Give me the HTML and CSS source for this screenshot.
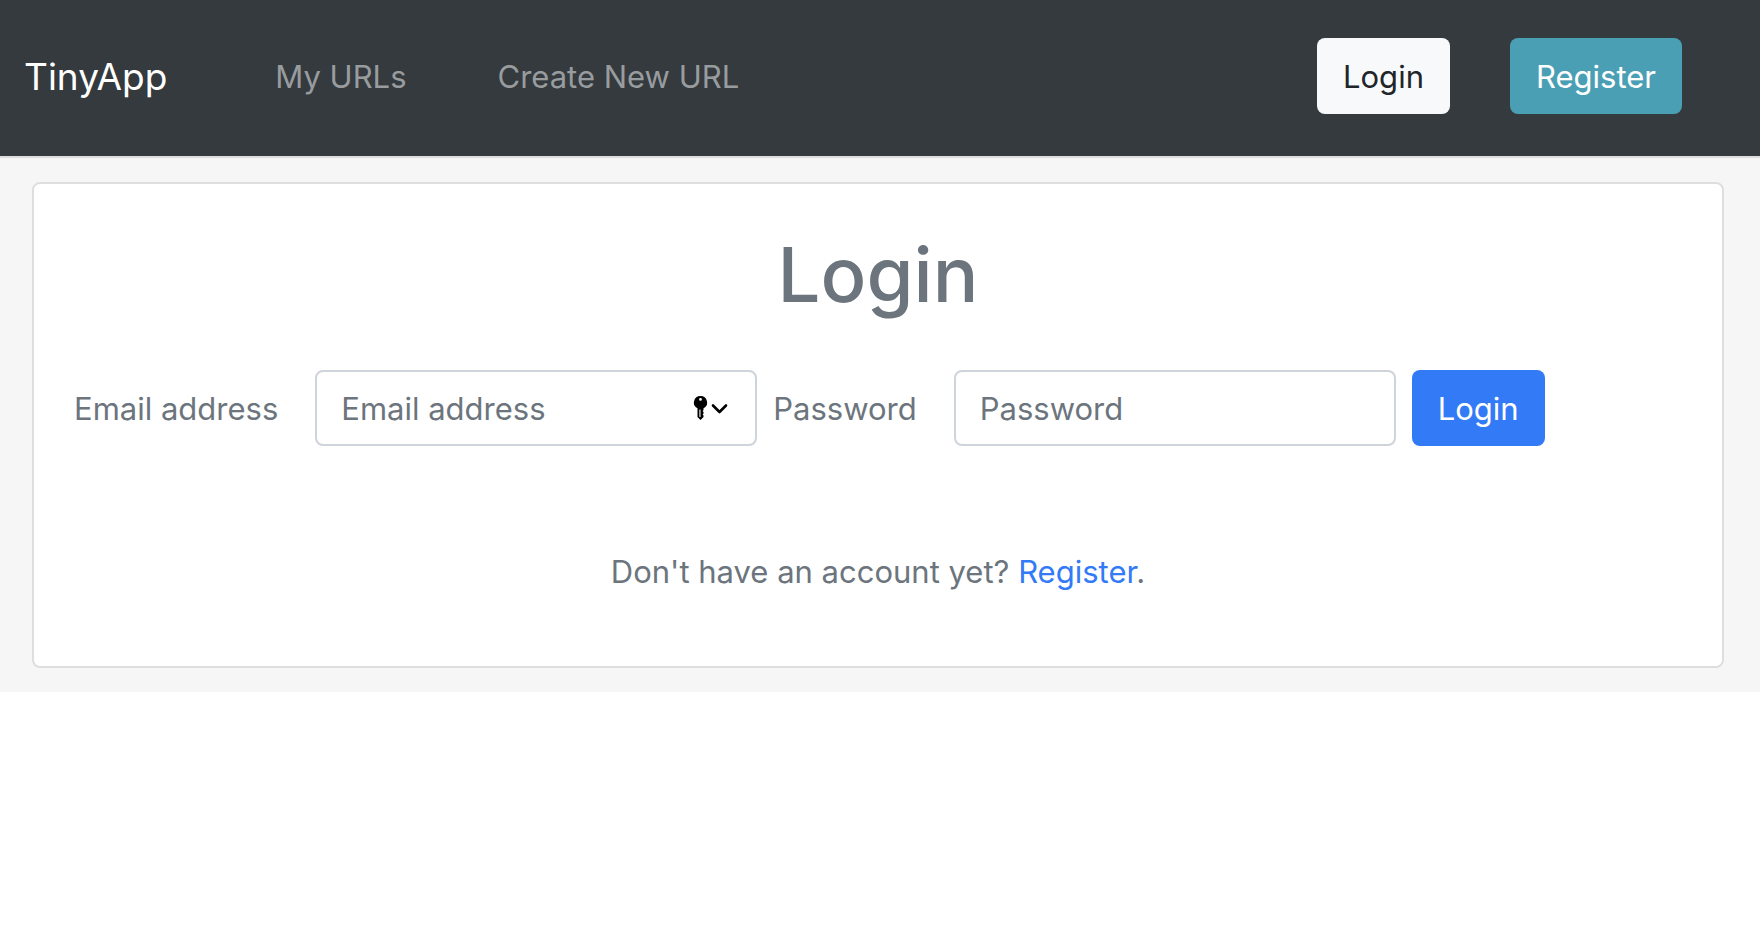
FILE: index.html
```html
<!DOCTYPE html>
<html lang="en">
<head>
  <meta charset="utf-8">
  <meta name="viewport" content="width=device-width, initial-scale=1">
  <title>TinyApp</title>
  <link rel="stylesheet" href="styles.css">
</head>
<body>
  <header class="navbar">
    <a class="brand" href="#">TinyApp</a>
    <nav class="nav-links">
      <a class="nav-link" href="#">My URLs</a>
      <a class="nav-link" href="#">Create New URL</a>
    </nav>
    <div class="nav-actions">
      <button class="btn btn-light" type="button">Login</button>
      <button class="btn btn-info" type="button">Register</button>
    </div>
  </header>
  <main class="page">
    <section class="card">
      <h1 class="title">Login</h1>
      <form class="login-form">
        <label class="label" for="email">Email address</label>
        <div class="field">
          <input class="input" id="email" type="email" placeholder="Email address">
          <svg class="autofill" viewBox="0 0 36 26" aria-hidden="true">
            <path fill-rule="evenodd" d="M7.500 1a6.500 6.500 0 0 1 3 12.300V15l-.8 1 .8 1v1.500l-.8 1 .8 1V22l-3 3-3-3v-8.700A6.500 6.500 0 0 1 7.500 1zM7.500 3a1.400 1.400 0 1 0 0 2.800 1.400 1.400 0 0 0 0-2.800zM6.400 14.500v7.500h1.100v-7.500z"/>
            <path d="M20 10.500l6.500 6.500 6.500-6.500" fill="none" stroke="#000" stroke-width="2.600" stroke-linecap="round" stroke-linejoin="round"/>
          </svg>
        </div>
        <label class="label" for="password">Password</label>
        <div class="field">
          <input class="input" id="password" type="password" placeholder="Password">
        </div>
        <button class="btn btn-primary" type="submit">Login</button>
      </form>
      <p class="hint">Don't have an account yet? <a class="link" href="#">Register</a>.</p>
    </section>
  </main>
</body>
</html>
```
FILE: styles.css
```css
* {
  box-sizing: border-box;
}

body {
  margin: 0;
  background: #fff;
  color: #6c757d;
  font-family: Inter, "Liberation Sans", sans-serif;
  font-size: 31px;
  line-height: 48px;
}

.navbar {
  display: flex;
  align-items: center;
  padding: 38px 78px 42px 24px;
  background: #343a3e;
  border-bottom: 2px solid #dcdddd;
}

.brand {
  color: #fff;
  font-size: 37px;
  text-decoration: none;
}

.nav-links {
  display: flex;
  gap: 91px;
  margin-left: 108px;
}

.nav-link {
  color: #999c9f;
  text-decoration: none;
}

.brand,
.nav-link {
  padding-top: 2px;
}

.nav-actions {
  display: flex;
  gap: 60px;
  margin-left: auto;
}

.btn {
  height: 76px;
  padding: 2px 26px 0;
  border: 0;
  border-radius: 8px;
  font: inherit;
}

.btn-light {
  background: #f8f9fb;
  color: #212529;
}

.btn-info {
  background: #4b9fb5;
  color: #fff;
}

.btn-primary {
  background: #337af7;
  color: #fff;
}

.page {
  padding: 24px 36px 24px 32px;
  background: #f6f6f6;
}

.card {
  padding: 42px 40px 70px;
  background: #fff;
  border: 2px solid #dedede;
  border-radius: 8px;
}

.title {
  margin: 0 0 48px;
  font-size: 76px;
  font-weight: 500;
  line-height: 96px;
  text-align: center;
}

.login-form {
  display: flex;
  align-items: center;
  gap: 16px;
}

.label {
  margin-right: 21px;
  padding-top: 2px;
  white-space: nowrap;
}

.field {
  position: relative;
  flex: 0 1 442px;
}

.input {
  display: block;
  width: 100%;
  height: 76px;
  padding: 0 24px;
  border: 2px solid #ced4da;
  border-radius: 8px;
  background: #fff;
  color: #495057;
  font: inherit;
}

.input::placeholder {
  color: #6c757d;
  opacity: 1;
}

.autofill {
  position: absolute;
  top: 25px;
  right: 28px;
  width: 36px;
  height: 26px;
}

.hint {
  margin: 102px 0 0;
  text-align: center;
}

.link {
  color: #337af7;
  text-decoration: none;
}
```
